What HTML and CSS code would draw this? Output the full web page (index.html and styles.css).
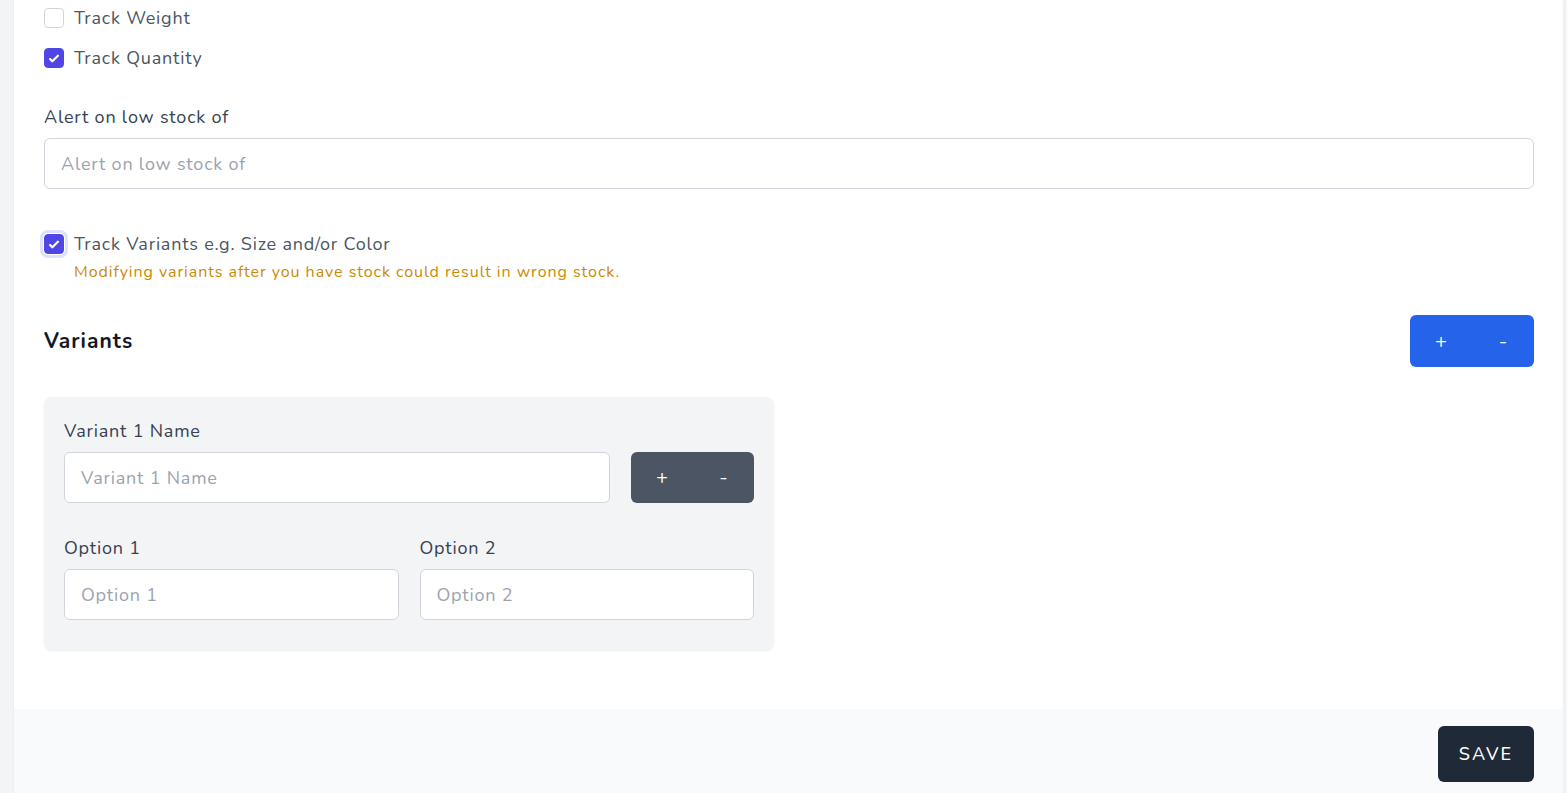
FILE: index.html
```html
<!DOCTYPE html>
<html lang="en">
<head>
<meta charset="utf-8">
<title>Product inventory</title>
<link rel="stylesheet" href="styles.css">
</head>
<body>
<div class="card">
  <div class="card-body">
    <label class="check-row first">
      <span class="box"></span>
      <span class="check-text">Track Weight</span>
    </label>
    <label class="check-row second">
      <span class="box checked"><svg viewBox="0 0 16 16"><path fill="#fff" d="M12.207 4.793a1 1 0 010 1.414l-5 5a1 1 0 01-1.414 0l-2-2a1 1 0 011.414-1.414L6.5 9.086l4.293-4.293a1 1 0 011.414 0z"/></svg></span>
      <span class="check-text">Track Quantity</span>
    </label>

    <div class="field alert-field">
      <div class="label">Alert on low stock of</div>
      <div class="input placeholder">Alert on low stock of</div>
    </div>

    <label class="check-row variants-check">
      <span class="box checked focused"><svg viewBox="0 0 16 16"><path fill="#fff" d="M12.207 4.793a1 1 0 010 1.414l-5 5a1 1 0 01-1.414 0l-2-2a1 1 0 011.414-1.414L6.5 9.086l4.293-4.293a1 1 0 011.414 0z"/></svg></span>
      <span class="check-text">Track Variants e.g. Size and/or Color</span>
    </label>
    <p class="warning">Modifying variants after you have stock could result in wrong stock.</p>

    <div class="variants-head">
      <h2>Variants</h2>
      <div class="btn-group blue">
        <button>+</button><button>-</button>
      </div>
    </div>

    <div class="variant-card">
      <div class="label">Variant 1 Name</div>
      <div class="name-row">
        <div class="input placeholder grow">Variant 1 Name</div>
        <div class="btn-group gray">
          <button>+</button><button>-</button>
        </div>
      </div>
      <div class="options">
        <div class="option">
          <div class="label">Option 1</div>
          <div class="input placeholder">Option 1</div>
        </div>
        <div class="option">
          <div class="label">Option 2</div>
          <div class="input placeholder">Option 2</div>
        </div>
      </div>
    </div>
  </div>
  <div class="card-footer">
    <button class="save">SAVE</button>
  </div>
</div>
</body>
</html>
```

FILE: styles.css
```css
* { box-sizing: border-box; }
html, body { margin: 0; padding: 0; }
body {
  background: #f3f4f6;
  font-family: "Nunito", "Lato", "Noto Sans", sans-serif;
  color: #374151;
}
.card {
  margin-left: 14px;
  margin-right: 4px;
  background: #fff;
  box-shadow: 0 0 2px rgba(0,0,0,0.08);
  min-height: 793px;
  display: flex;
  flex-direction: column;
  letter-spacing: 0.05em;
}
.card-body {
  padding: 8px 29px 59px 30px;
}
.check-row {
  display: flex;
  align-items: center;
  height: 20px;
  gap: 10px;
}
.check-row.second { margin-top: 20px; }
.box {
  width: 20px;
  height: 20px;
  border: 1px solid #d1d5db;
  border-radius: 4px;
  background: #fff;
  display: flex;
  align-items: center;
  justify-content: center;
  flex: none;
}
.box.checked {
  background: #4f46e5;
  border-color: #4f46e5;
}
.box svg { width: 19px; height: 19px; }
.box.focused {
  box-shadow: 0 0 0 1px #fff, 0 0 0 4px #dde1fc;
}
.check-text {
  font-size: 18px;
  line-height: 20px;
  color: #4b5563;
}
.label {
  font-size: 18px;
  line-height: 24px;
  color: #374151;
}
.alert-field { margin-top: 37px; }
.input {
  margin-top: 9px;
  height: 51px;
  border: 1px solid #d1d5db;
  border-radius: 6px;
  background: #fff;
  padding: 0 16px;
  display: flex;
  align-items: center;
  font-size: 18px;
}
.placeholder { color: #9ca3af; }
.variants-check { margin-top: 45px; }
.warning {
  margin: 8px 0 0 30px;
  font-size: 16px;
  line-height: 20px;
  color: #ca8a04;
  letter-spacing: 0.06em;
}
.variants-head {
  margin-top: 33px;
  display: flex;
  align-items: center;
  justify-content: space-between;
}
.variants-head h2 {
  margin: 0;
  font-size: 21px;
  font-weight: 700;
  color: #111827;
  letter-spacing: 0.05em;
}
.btn-group {
  display: flex;
  border-radius: 6px;
  overflow: hidden;
}
.btn-group button {
  width: 62px;
  border: 0;
  color: #fff;
  font-family: inherit;
  font-size: 20px;
  padding: 0;
}
.btn-group.blue button { background: #2563eb; height: 52px; }
.btn-group.gray { margin-top: 9px; }
.btn-group.gray button { background: #4b5563; width: 62px; height: 51px; }
.btn-group.gray button + button { width: 61px; }
.variant-card {
  margin-top: 30px;
  width: 730px;
  background: #f3f4f6;
  border-radius: 8px;
  box-shadow: 0 1px 2px rgba(0,0,0,0.08);
  padding: 22px 20px 30px 20px;
}
.name-row {
  display: flex;
  gap: 21px;
}
.grow { flex: 1; }
.options {
  margin-top: 33px;
  display: grid;
  grid-template-columns: 1fr 1fr;
  gap: 21px;
}
.card-footer {
  background: #f9fafb;
  padding: 17px 29px;
  display: flex;
  justify-content: flex-end;
  flex: 1;
}
.save {
  width: 96px;
  height: 56px;
  background: #1f2937;
  color: #fff;
  border: 0;
  border-radius: 6px;
  font-family: inherit;
  font-size: 18px;
  letter-spacing: 2px;
  font-weight: 500;
}
```
